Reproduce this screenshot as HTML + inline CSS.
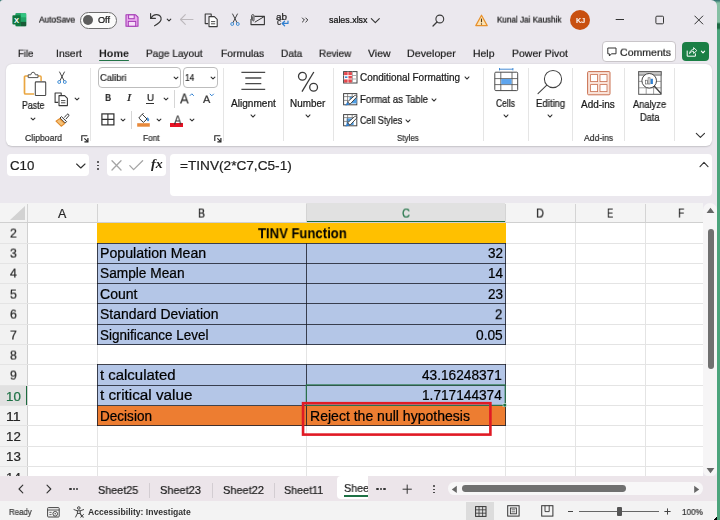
<!DOCTYPE html><html><head><meta charset="utf-8"><title>sales.xlsx - Excel</title><style>
html,body{margin:0;padding:0}
body{width:720px;height:520px;overflow:hidden;background:linear-gradient(to bottom,#2a6a6a 0,#86c0a4 3px,#86c0a4 22px,#1e6a44 24px,#1e6a44 28px,#4ca47c 30px);position:relative;font-family:"Liberation Sans",sans-serif}
#win{position:absolute;left:0;top:0;width:717px;height:520px;background:#ebe8ee;border-radius:3px 6px 7px 3px;overflow:hidden}
#win div,#win svg,#win span{position:absolute}
#win span{white-space:nowrap;line-height:1;transform-origin:0 50%;display:block;will-change:transform;-webkit-text-stroke:0.22px}

</style></head><body><div id="win">
<svg style="left:12px;top:13px;" width="15" height="14" viewBox="0 0 15 14">
<rect x="3.6" y="0.3" width="10.6" height="12.9" rx="1.3" fill="#1f9d5c"/>
<rect x="8.9" y="0.3" width="5.3" height="4.3" fill="#33c481"/>
<rect x="8.9" y="4.6" width="5.3" height="4.3" fill="#21a366"/>
<rect x="3.6" y="0.3" width="5.3" height="4.3" fill="#21a366"/>
<rect x="8.9" y="8.9" width="5.3" height="4.3" fill="#185c37"/>
<rect x="3.6" y="8.9" width="5.3" height="4.3" fill="#107c41"/>
<rect x="0.4" y="2.2" width="8.2" height="9.2" rx="0.9" fill="#0f753c"/>
<text x="4.5" y="9.6" font-family="Liberation Sans, sans-serif" font-weight="bold" font-size="7.6" fill="#fff" text-anchor="middle">X</text>
</svg>
<div style="left:79.5px;top:12px;width:35.5px;height:15px;border:1px solid #6e6e6e;border-radius:9px;background:#fbfbfb"></div>
<div style="left:83px;top:15px;width:10px;height:10px;border-radius:5px;background:#5d5d5d"></div>
<svg style="left:124.5px;top:13.5px;" width="14" height="13" viewBox="0 0 14 13">
<path d="M1 0.8 H10.6 L13 3.2 V12.2 H1 Z" fill="#e9a9ee" stroke="#a43ab5" stroke-width="1.1" stroke-linejoin="round"/>
<rect x="3.6" y="0.9" width="5.6" height="3.8" fill="#f6dff8" stroke="#a43ab5" stroke-width="1"/>
<rect x="3.3" y="7.4" width="7.4" height="4.8" fill="#f6dff8" stroke="#a43ab5" stroke-width="1"/>
</svg>
<svg style="left:148.5px;top:12px;" width="14" height="15" viewBox="0 0 14 15">
<path d="M1.6 1.6 V6.4 H6.4" fill="none" stroke="#3a3a3a" stroke-width="1.15" stroke-linecap="round" stroke-linejoin="round"/>
<path d="M1.9 6.1 C3.4 3.6 5.6 2.4 7.8 2.6 C10.6 2.9 12.3 5 12.1 7.4 C11.9 10 9.3 11.6 5.6 13.8" fill="none" stroke="#3a3a3a" stroke-width="1.15" stroke-linecap="round"/>
</svg>
<svg style="left:164px;top:15.3px;" width="10" height="10" viewBox="0 0 10 10"><path d="M3.2 4.08 L5 5.92 L6.8 4.08" fill="none" stroke="#333" stroke-width="1.1" stroke-linecap="round" stroke-linejoin="round"/></svg>
<svg style="left:179px;top:13px;" width="16" height="13" viewBox="0 0 16 13"><path d="M1.5 6.5 H14 M6.3 1.6 L1.5 6.5 L6.3 11.4" fill="none" stroke="#bdb9bd" stroke-width="1.1" stroke-linecap="round" stroke-linejoin="round"/></svg>
<svg style="left:203.5px;top:12.5px;" width="15" height="15" viewBox="0 0 15 15">
<path d="M4.2 10.6 H1.2 V1 H7.2 V3.2" fill="none" stroke="#3a3a3a" stroke-width="1.1" stroke-linejoin="round"/>
<path d="M5 3.6 H10.4 L13.2 6.4 V13.6 H5 Z" fill="#fff" stroke="#3a3a3a" stroke-width="1.1" stroke-linejoin="round"/>
<path d="M7 8.6 H11.2 M7 10.8 H11.2" stroke="#3a3a3a" stroke-width="0.9"/>
</svg>
<svg style="left:228.5px;top:13px;" width="12" height="14" viewBox="0 0 12 14">
<path d="M3.6 1 L8 9.6 M8.4 1 L4 9.6" fill="none" stroke="#3a3a3a" stroke-width="0.95" stroke-linecap="round"/>
<circle cx="3.2" cy="11" r="1.45" fill="none" stroke="#3b8bd6" stroke-width="0.95"/>
<circle cx="8.8" cy="11" r="1.45" fill="none" stroke="#3b8bd6" stroke-width="0.95"/>
</svg>
<svg style="left:250px;top:13.5px;" width="16" height="12" viewBox="0 0 16 12">
<path d="M4.6 2.4 H14.4 V10.6 H1 V5" fill="none" stroke="#3a3a3a" stroke-width="1.1" stroke-linejoin="round"/>
<path d="M4.8 8.2 L14.2 2.6" fill="none" stroke="#3a3a3a" stroke-width="1"/>
<path d="M1.6 5.6 V1.8 Q1.6 0.6 2.8 0.6 Q4 0.6 4 1.8 V6.2 Q4 7 3.3 7 Q2.7 7 2.7 6.2 V2.4" fill="none" stroke="#3a3a3a" stroke-width="0.9"/>
</svg>
<svg style="left:279.6px;top:19.6px;" width="10" height="8" viewBox="0 0 10 8"><path d="M8 1 V3.4 H2.4 M4.6 1.2 L2.2 3.5 L4.6 5.8" fill="none" stroke="#2f7fd0" stroke-width="1.2" stroke-linecap="round" stroke-linejoin="round"/></svg>
<svg style="left:301px;top:16px;" width="9" height="8" viewBox="0 0 9 8"><path d="M1.4 2 L3.4 4 L1.4 6 M4.8 2 L6.8 4 L4.8 6" fill="none" stroke="#333" stroke-width="1" stroke-linecap="round" stroke-linejoin="round"/></svg>
<svg style="left:370px;top:16px;" width="11" height="9" viewBox="0 0 11 9"><path d="M1.3 2.6 L5.3 6.6 L9.3 2.6" fill="none" stroke="#333" stroke-width="1.1" stroke-linecap="round" stroke-linejoin="round"/></svg>
<svg style="left:432px;top:13.5px;" width="13" height="13" viewBox="0 0 13 13"><circle cx="7.8" cy="5" r="3.9" fill="none" stroke="#3a3a3a" stroke-width="1.1"/><path d="M5 8 L1 12" stroke="#3a3a3a" stroke-width="1.2" stroke-linecap="round"/></svg>
<svg style="left:474.5px;top:13.5px;" width="13" height="13" viewBox="0 0 13 13"><path d="M6.5 1.2 L12.2 11.6 H0.8 Z" fill="#fbe3b5" stroke="#e8902a" stroke-width="1.2" stroke-linejoin="round"/>
<path d="M6.5 4.6 V8.2" stroke="#5a3a10" stroke-width="1.1"/><circle cx="6.5" cy="10" r="0.65" fill="#5a3a10"/></svg>
<div style="left:570px;top:10px;width:20px;height:20px;border-radius:10px;background:#c8500f"></div>
<svg style="left:615px;top:15px;" width="10" height="10" viewBox="0 0 10 10"><path d="M0.7 4.5 H9" stroke="#333" stroke-width="1"/></svg>
<svg style="left:654.5px;top:15px;" width="10" height="10" viewBox="0 0 10 10"><rect x="0.9" y="1.2" width="7.6" height="7.6" rx="1" fill="none" stroke="#333" stroke-width="1"/></svg>
<svg style="left:693.5px;top:15px;" width="10" height="10" viewBox="0 0 10 10"><path d="M0.8 1 L8.8 9 M8.8 1 L0.8 9" stroke="#333" stroke-width="1" stroke-linecap="round"/></svg>
<div style="left:99px;top:59.5px;width:30px;height:1.7px;background:#217346;border-radius:1px;"></div>
<div style="left:601.8px;top:40.8px;width:72.2px;height:19px;border:1px solid #c9c5c9;border-radius:4px;background:#fff"></div>
<svg style="left:606.8px;top:46.5px;" width="11" height="11" viewBox="0 0 11 11"><path d="M0.8 1 H9 V6.8 H4.4 L2.4 9 V6.8 H0.8 Z" fill="none" stroke="#333" stroke-width="1" stroke-linejoin="round"/></svg>
<div style="left:682.4px;top:41.6px;width:26.4px;height:19.6px;border-radius:4px;background:#1a7f45"></div>
<svg style="left:686px;top:45.6px;" width="12" height="12" viewBox="0 0 12 12"><path d="M1.2 4.6 V10.2 H9.4 V7.4" fill="none" stroke="#fff" stroke-width="1" stroke-linejoin="round"/><path d="M3.6 7.6 C3.8 5 5.4 3.6 7.6 3.6 V1.6 L10.8 4.6 L7.6 7.4 V5.4 C5.8 5.4 4.6 6 3.6 7.6 Z" fill="none" stroke="#fff" stroke-width="0.9" stroke-linejoin="round"/></svg>
<svg style="left:697.8px;top:46.9px;" width="10" height="10" viewBox="0 0 10 10"><path d="M3.38 4.126 L5 5.874 L6.62 4.126" fill="none" stroke="#fff" stroke-width="1.1" stroke-linecap="round" stroke-linejoin="round"/></svg>
<div style="left:6px;top:64px;width:706px;height:82.4px;border-radius:6px;background:#fff;box-shadow:0 0.5px 1.5px rgba(0,0,0,0.16)"></div>
<svg style="left:23px;top:70.5px;" width="24" height="26" viewBox="0 0 24 26">
<path d="M6 5 H2.6 Q1.5 5 1.5 6.1 V21.9 Q1.5 23 2.6 23 H11" fill="none" stroke="#eaa640" stroke-width="1.7"/>
<path d="M14.4 5 H17 Q18.1 5 18.1 6.1 V10" fill="none" stroke="#eaa640" stroke-width="1.5"/>
<path d="M5.2 6.6 V3.8 H7.8 Q8.2 1.2 10.1 1.2 Q12 1.2 12.4 3.8 H15 V6.6 Z" fill="#fff" stroke="#555" stroke-width="1" stroke-linejoin="round"/>
<rect x="12.3" y="10.9" width="10.4" height="13.6" rx="0.8" fill="#fff" stroke="#4a4a4a" stroke-width="1.1"/>
</svg>
<svg style="left:27.6px;top:113.7px;" width="10" height="10" viewBox="0 0 10 10"><path d="M3.11 4.034 L5 5.966 L6.890000000000001 4.034" fill="none" stroke="#333" stroke-width="1.1" stroke-linecap="round" stroke-linejoin="round"/></svg>
<svg style="left:56px;top:71px;" width="12" height="14" viewBox="0 0 12 14">
<path d="M3.6 1 L8 9.6 M8.4 1 L4 9.6" fill="none" stroke="#3a3a3a" stroke-width="0.95" stroke-linecap="round"/>
<circle cx="3.2" cy="11" r="1.45" fill="none" stroke="#3b8bd6" stroke-width="0.95"/>
<circle cx="8.8" cy="11" r="1.45" fill="none" stroke="#3b8bd6" stroke-width="0.95"/>
</svg>
<svg style="left:54.3px;top:91.6px;" width="15" height="15" viewBox="0 0 15 15">
<path d="M4.2 10.4 H1.1 V1 H7.2 V3.2" fill="none" stroke="#3a3a3a" stroke-width="1.1" stroke-linejoin="round"/>
<path d="M5 3.6 H10.6 L13.4 6.4 V13.6 H5 Z" fill="#fff" stroke="#3a3a3a" stroke-width="1.1" stroke-linejoin="round"/>
<path d="M7 8.6 H11.4 M7 10.8 H11.4" stroke="#3a3a3a" stroke-width="0.9"/>
</svg>
<svg style="left:72px;top:94.2px;" width="10" height="10" viewBox="0 0 10 10"><path d="M3.11 4.034 L5 5.966 L6.890000000000001 4.034" fill="none" stroke="#333" stroke-width="1.1" stroke-linecap="round" stroke-linejoin="round"/></svg>
<svg style="left:54.5px;top:113px;" width="15" height="14" viewBox="0 0 15 14">
<path d="M9.2 4.6 L12 1.4 Q12.8 0.6 13.6 1.4 Q14.3 2.2 13.6 3 L10.8 6.2" fill="#fff" stroke="#3a3a3a" stroke-width="1"/>
<path d="M6.4 3.6 L11.6 8.6 L10.2 10 L5 5 Z" fill="#fff" stroke="#3a3a3a" stroke-width="1" stroke-linejoin="round"/>
<path d="M4.6 5.6 L9.6 10.6 L6.2 13.2 L1 8.2 Z" fill="#f4c27a" stroke="#e08a2c" stroke-width="1.1" stroke-linejoin="round"/>
</svg>
<svg style="left:80.5px;top:134.6px;" width="8" height="8" viewBox="0 0 8 8"><path d="M0.8 6 V0.8 H6.4" fill="none" stroke="#222" stroke-width="1.1"/><path d="M3.3 3.3 L6.6 6.4" stroke="#222" stroke-width="1.1"/><path d="M6.9 3 V6.8 H3.4" fill="none" stroke="#222" stroke-width="1.2"/></svg>
<div style="left:89.5px;top:68px;width:1px;height:73px;background:#e5e5e5;"></div>
<div style="left:97.8px;top:67.4px;width:81.6px;height:18.8px;border:1px solid #bdbdbd;border-radius:4px;background:#fff"></div>
<svg style="left:170.7px;top:73.3px;" width="10" height="10" viewBox="0 0 10 10"><path d="M3.11 4.034 L5 5.966 L6.890000000000001 4.034" fill="none" stroke="#333" stroke-width="1.1" stroke-linecap="round" stroke-linejoin="round"/></svg>
<div style="left:182.7px;top:67.4px;width:33.7px;height:18.8px;border:1px solid #bdbdbd;border-radius:4px;background:#fff"></div>
<svg style="left:207.5px;top:73.3px;" width="10" height="10" viewBox="0 0 10 10"><path d="M3.11 4.034 L5 5.966 L6.890000000000001 4.034" fill="none" stroke="#333" stroke-width="1.1" stroke-linecap="round" stroke-linejoin="round"/></svg>
<div style="left:146.3px;top:102.7px;width:7.6px;height:1px;background:#333;"></div>
<svg style="left:161px;top:94.2px;" width="10" height="10" viewBox="0 0 10 10"><path d="M3.11 4.034 L5 5.966 L6.890000000000001 4.034" fill="none" stroke="#333" stroke-width="1.1" stroke-linecap="round" stroke-linejoin="round"/></svg>
<div style="left:173.7px;top:90px;width:1px;height:17.599999999999994px;background:#d6d6d6;"></div>
<svg style="left:188.5px;top:92.5px;" width="6" height="4" viewBox="0 0 6 4"><path d="M0.8 2.8 L2.8 0.8 L4.8 2.8" fill="none" stroke="#2f7fd0" stroke-width="1"/></svg>
<svg style="left:209px;top:93px;" width="6" height="4" viewBox="0 0 6 4"><path d="M0.8 0.8 L2.8 2.8 L4.8 0.8" fill="none" stroke="#2f7fd0" stroke-width="1"/></svg>
<svg style="left:100.5px;top:113.4px;" width="14" height="13" viewBox="0 0 14 13"><rect x="0.9" y="0.9" width="12" height="11" fill="none" stroke="#2e2e2e" stroke-width="1.2"/><path d="M6.9 0.9 V11.9 M0.9 6.4 H12.9" stroke="#2e2e2e" stroke-width="1.1"/></svg>
<svg style="left:118px;top:115.3px;" width="10" height="10" viewBox="0 0 10 10"><path d="M3.11 4.034 L5 5.966 L6.890000000000001 4.034" fill="none" stroke="#333" stroke-width="1.1" stroke-linecap="round" stroke-linejoin="round"/></svg>
<div style="left:130.9px;top:110.5px;width:1px;height:18.5px;background:#d6d6d6;"></div>
<svg style="left:137px;top:113px;" width="14" height="14" viewBox="0 0 14 14">
<path d="M5.2 1.2 L10 6 L6.4 9.4 L1.8 5 Z" fill="#fff" stroke="#3a3a3a" stroke-width="1" stroke-linejoin="round"/>
<path d="M5.2 1.2 L6.6 0.4" stroke="#3a3a3a" stroke-width="1"/>
<path d="M10.6 4.6 Q12.6 7 11.4 8 Q10.2 8.4 10.4 6.6 Z" fill="#2f7fd0" stroke="#2f7fd0" stroke-width="0.6"/>
<rect x="0.2" y="10.2" width="12.6" height="3.5" fill="#e8893b"/>
</svg>
<svg style="left:153.8px;top:115.3px;" width="10" height="10" viewBox="0 0 10 10"><path d="M3.11 4.034 L5 5.966 L6.890000000000001 4.034" fill="none" stroke="#333" stroke-width="1.1" stroke-linecap="round" stroke-linejoin="round"/></svg>
<div style="left:170.3px;top:123.2px;width:13px;height:3.5px;background:#e81224;"></div>
<svg style="left:187.3px;top:115.3px;" width="10" height="10" viewBox="0 0 10 10"><path d="M3.11 4.034 L5 5.966 L6.890000000000001 4.034" fill="none" stroke="#333" stroke-width="1.1" stroke-linecap="round" stroke-linejoin="round"/></svg>
<svg style="left:213.6px;top:134.5px;" width="8" height="8" viewBox="0 0 8 8"><path d="M0.8 6 V0.8 H6.4" fill="none" stroke="#222" stroke-width="1.1"/><path d="M3.3 3.3 L6.6 6.4" stroke="#222" stroke-width="1.1"/><path d="M6.9 3 V6.8 H3.4" fill="none" stroke="#222" stroke-width="1.2"/></svg>
<div style="left:223.1px;top:68px;width:1px;height:73px;background:#e5e5e5;"></div>
<svg style="left:241px;top:71px;" width="25" height="20" viewBox="0 0 25 20"><path d="M0.4 1.3 H24.2 M4.3 7 H20.3 M4.3 12.7 H20.3 M0.4 18.3 H24.2" stroke="#4a4a4a" stroke-width="1.3"/></svg>
<svg style="left:247.5px;top:110.7px;" width="10" height="10" viewBox="0 0 10 10"><path d="M3.0199999999999996 3.9879999999999995 L5 6.0120000000000005 L6.98 3.9879999999999995" fill="none" stroke="#333" stroke-width="1.1" stroke-linecap="round" stroke-linejoin="round"/></svg>
<div style="left:283.1px;top:68px;width:1px;height:73px;background:#e5e5e5;"></div>
<svg style="left:297px;top:70.5px;" width="22" height="22" viewBox="0 0 22 22"><circle cx="5.4" cy="5.2" r="3.9" fill="none" stroke="#3a3a3a" stroke-width="1.3"/><circle cx="16.6" cy="16.2" r="3.9" fill="none" stroke="#3a3a3a" stroke-width="1.3"/><path d="M16.8 1 L5 20.6" stroke="#3a3a3a" stroke-width="1.3"/></svg>
<svg style="left:302.5px;top:110.7px;" width="10" height="10" viewBox="0 0 10 10"><path d="M3.0199999999999996 3.9879999999999995 L5 6.0120000000000005 L6.98 3.9879999999999995" fill="none" stroke="#333" stroke-width="1.1" stroke-linecap="round" stroke-linejoin="round"/></svg>
<div style="left:332.9px;top:68px;width:1px;height:73px;background:#e5e5e5;"></div>
<svg style="left:342.5px;top:71px;" width="15" height="13" viewBox="0 0 15 13">
<rect x="0.6" y="0.6" width="13.4" height="11.4" fill="#fff" stroke="#444" stroke-width="1"/>
<rect x="1.1" y="1.1" width="8" height="3.3" fill="#e5484d"/>
<rect x="5.2" y="4.6" width="4" height="3.2" fill="#e5484d"/>
<rect x="1.1" y="8.1" width="8" height="3.4" fill="#e5484d"/>
<rect x="2" y="5.4" width="2.6" height="1.6" fill="#3b8bd6"/>
<path d="M5 0.6 V12 M9.4 0.6 V12 M0.6 4.5 H14 M0.6 8 H14" stroke="#fff" stroke-width="0.7"/>
<path d="M9.4 0.6 V12 M9.4 4.5 H14 M9.4 8 H14" stroke="#777" stroke-width="0.6"/>
</svg>
<svg style="left:342.5px;top:92.9px;" width="15" height="13" viewBox="0 0 15 13">
<rect x="0.6" y="0.6" width="13.2" height="11.2" fill="#fff" stroke="#444" stroke-width="1"/>
<rect x="6.6" y="3.8" width="7" height="6.6" fill="#4f9fe6"/>
<path d="M0.6 3.6 H13.8 M0.6 7.4 H5 M4.6 0.6 V11.8 M9.2 0.6 V3.6" stroke="#666" stroke-width="0.7"/>
<path d="M2.4 12.6 L4.2 9 L6.8 11.6 Z" fill="#2f7fd0"/>
<path d="M4.6 8.8 L11.6 2.6 Q12.6 1.9 13.4 2.7 Q14.1 3.6 13.3 4.5 L7 11.2 Z" fill="#fff" stroke="#333" stroke-width="0.9" stroke-linejoin="round"/>
</svg>
<svg style="left:342.5px;top:114.2px;" width="15" height="13" viewBox="0 0 15 13">
<rect x="0.6" y="0.6" width="13.2" height="11.2" fill="#fff" stroke="#444" stroke-width="1"/>
<rect x="3.6" y="4.4" width="7" height="6.6" fill="#4f9fe6"/>
<path d="M0.6 3.6 H13.8 M0.6 7.4 H5 M4.6 0.6 V11.8 M9.2 0.6 V3.6" stroke="#666" stroke-width="0.7"/>
<path d="M2.4 12.6 L4.2 9 L6.8 11.6 Z" fill="#2f7fd0"/>
<path d="M4.6 8.8 L11.6 2.6 Q12.6 1.9 13.4 2.7 Q14.1 3.6 13.3 4.5 L7 11.2 Z" fill="#fff" stroke="#333" stroke-width="0.9" stroke-linejoin="round"/>
</svg>
<svg style="left:461.5px;top:73.3px;" width="10" height="10" viewBox="0 0 10 10"><path d="M3.0199999999999996 3.9879999999999995 L5 6.0120000000000005 L6.98 3.9879999999999995" fill="none" stroke="#333" stroke-width="1.1" stroke-linecap="round" stroke-linejoin="round"/></svg>
<svg style="left:428.5px;top:94.9px;" width="10" height="10" viewBox="0 0 10 10"><path d="M3.0199999999999996 3.9879999999999995 L5 6.0120000000000005 L6.98 3.9879999999999995" fill="none" stroke="#333" stroke-width="1.1" stroke-linecap="round" stroke-linejoin="round"/></svg>
<svg style="left:403px;top:116.3px;" width="10" height="10" viewBox="0 0 10 10"><path d="M3.0199999999999996 3.9879999999999995 L5 6.0120000000000005 L6.98 3.9879999999999995" fill="none" stroke="#333" stroke-width="1.1" stroke-linecap="round" stroke-linejoin="round"/></svg>
<div style="left:483.1px;top:68px;width:1px;height:73px;background:#e5e5e5;"></div>
<svg style="left:493.5px;top:67.5px;" width="25" height="24" viewBox="0 0 25 24">
<path d="M5.5 1.2 H18.9 M5.5 0 V2.4 M18.9 0 V2.4" stroke="#2f7fd0" stroke-width="0.9"/>
<rect x="0.8" y="4.2" width="22.9" height="18.4" rx="1" fill="#fff" stroke="#4a4a4a" stroke-width="1"/>
<path d="M0.8 10.6 H23.7 M0.8 16.6 H23.7 M6.8 4.2 V22.6 M18 4.2 V22.6" stroke="#4a4a4a" stroke-width="0.8"/>
<rect x="7.2" y="11" width="10.4" height="5.2" fill="#5ea5ee"/>
</svg>
<svg style="left:500.5px;top:110.7px;" width="10" height="10" viewBox="0 0 10 10"><path d="M3.0199999999999996 3.9879999999999995 L5 6.0120000000000005 L6.98 3.9879999999999995" fill="none" stroke="#333" stroke-width="1.1" stroke-linecap="round" stroke-linejoin="round"/></svg>
<div style="left:527.8px;top:68px;width:1px;height:73px;background:#e5e5e5;"></div>
<svg style="left:537px;top:68.5px;" width="27" height="26" viewBox="0 0 27 26"><circle cx="16" cy="10" r="8.6" fill="none" stroke="#444" stroke-width="1.05"/><path d="M9.8 16.2 L1 24.6" stroke="#444" stroke-width="1.1" stroke-linecap="round"/></svg>
<svg style="left:545px;top:110.7px;" width="10" height="10" viewBox="0 0 10 10"><path d="M3.0199999999999996 3.9879999999999995 L5 6.0120000000000005 L6.98 3.9879999999999995" fill="none" stroke="#333" stroke-width="1.1" stroke-linecap="round" stroke-linejoin="round"/></svg>
<div style="left:572.0px;top:68px;width:1px;height:73px;background:#e5e5e5;"></div>
<svg style="left:586.8px;top:70.6px;" width="24" height="25" viewBox="0 0 24 25">
<rect x="0.6" y="0.6" width="22.4" height="23.2" rx="1" fill="#f9e2d8" stroke="#c97050" stroke-width="1"/>
<rect x="3.6" y="3.6" width="7" height="7" fill="#fff" stroke="#c97050" stroke-width="0.8"/>
<rect x="13" y="3.6" width="7" height="7" fill="#fff" stroke="#c97050" stroke-width="0.8"/>
<rect x="3.6" y="13.6" width="7" height="7" fill="#fff" stroke="#c97050" stroke-width="0.8"/>
<rect x="13" y="13.6" width="7" height="7" fill="#fff" stroke="#c97050" stroke-width="0.8"/>
</svg>
<div style="left:623.8px;top:68px;width:1px;height:73px;background:#e5e5e5;"></div>
<svg style="left:637.6px;top:70.6px;" width="24" height="25" viewBox="0 0 24 25">
<rect x="0.7" y="0.7" width="22.4" height="22.6" fill="#fff" stroke="#555" stroke-width="1"/>
<rect x="0.7" y="0.7" width="22.4" height="3.4" fill="#c8c8c8" stroke="#555" stroke-width="0.8"/>
<path d="M0.7 10.4 H23.1 M0.7 16.8 H23.1 M8.2 4 V23.3 M15.6 4 V23.3" stroke="#777" stroke-width="0.7"/>
<circle cx="11.2" cy="9.8" r="7.3" fill="#fff" stroke="#444" stroke-width="1"/>
<rect x="7.6" y="9.2" width="1.9" height="3.8" fill="#fff" stroke="#555" stroke-width="0.6"/>
<rect x="10.1" y="6.8" width="1.9" height="6.2" fill="#fff" stroke="#555" stroke-width="0.6"/>
<rect x="12.6" y="7.8" width="2.3" height="5.2" fill="#2f7fd0"/>
<path d="M16.4 15.2 L22.8 22.2" stroke="#444" stroke-width="1.3" stroke-linecap="round"/>
</svg>
<div style="left:674.2px;top:68px;width:1px;height:73px;background:#e5e5e5;"></div>
<svg style="left:694.5px;top:131px;" width="11" height="9" viewBox="0 0 11 9"><path d="M1.3 2.4 L5.4 6.4 L9.5 2.4" fill="none" stroke="#333" stroke-width="1.1" stroke-linecap="round" stroke-linejoin="round"/></svg>
<div style="left:6.75px;top:153.75px;width:82.5px;height:22.5px;border-radius:4px;background:#fff"></div>
<svg style="left:75px;top:161px;" width="12" height="10" viewBox="0 0 12 10"><path d="M1.6 3 L5.8 7 L10 3" fill="none" stroke="#333" stroke-width="1.1" stroke-linecap="round" stroke-linejoin="round"/></svg>
<div style="left:97.1px;top:161.4px;width:1.9px;height:1.9px;background:#333;border-radius:1px;"></div>
<div style="left:97.1px;top:164.60000000000002px;width:1.9px;height:1.9px;background:#333;border-radius:1px;"></div>
<div style="left:97.1px;top:167.8px;width:1.9px;height:1.9px;background:#333;border-radius:1px;"></div>
<div style="left:106.75px;top:153.75px;width:59px;height:22.5px;border-radius:4px;background:#fff"></div>
<svg style="left:111px;top:160px;" width="11" height="11" viewBox="0 0 11 11"><path d="M1 0.8 L10 10 M10 0.8 L1 10" stroke="#a6a6a6" stroke-width="1.3" stroke-linecap="round"/></svg>
<svg style="left:129px;top:160px;" width="15" height="11" viewBox="0 0 15 11"><path d="M0.8 5.6 L4.6 9.6 L13.6 0.8" fill="none" stroke="#a6a6a6" stroke-width="1.3" stroke-linecap="round" stroke-linejoin="round"/></svg>
<div style="left:170px;top:153.5px;width:541.5px;height:42.5px;border-radius:4px;background:#fff"></div>
<svg style="left:699px;top:159.5px;" width="10" height="9" viewBox="0 0 10 9"><path d="M1 6.6 L5 2.4 L9 6.6" fill="none" stroke="#333" stroke-width="1.1" stroke-linecap="round" stroke-linejoin="round"/></svg>
<div style="left:0px;top:203px;width:703px;height:272.8px;background:#fff;"></div>
<div style="left:0px;top:203px;width:703px;height:19.5px;background:#f4f4f4;"></div>
<div style="left:0px;top:222.5px;width:27px;height:253.3px;background:#f2f2f2;"></div>
<div style="left:306px;top:203px;width:199px;height:19.5px;background:#e1e1e1;"></div>
<div style="left:306px;top:221.1px;width:199px;height:1.4px;background:#1c6b3e;"></div>
<div style="left:0px;top:385.2px;width:27px;height:20.30000000000001px;background:#e1e1e1;"></div>
<div style="left:25.8px;top:385.2px;width:1.4px;height:20.30000000000001px;background:#1c6b3e;"></div>
<svg style="left:9px;top:205px;" width="17" height="16" viewBox="0 0 17 16"><path d="M16 1 V15 H1 Z" fill="#d2d2d2"/></svg>
<div style="left:26.5px;top:204px;width:1px;height:18.5px;background:#d4d4d4;"></div>
<div style="left:96.5px;top:204px;width:1px;height:18.5px;background:#d4d4d4;"></div>
<div style="left:305.5px;top:204px;width:1px;height:18.5px;background:#d4d4d4;"></div>
<div style="left:504.5px;top:204px;width:1px;height:18.5px;background:#d4d4d4;"></div>
<div style="left:574.5px;top:204px;width:1px;height:18.5px;background:#d4d4d4;"></div>
<div style="left:644.5px;top:204px;width:1px;height:18.5px;background:#d4d4d4;"></div>
<div style="left:0px;top:222.0px;width:703px;height:1px;background:#d0d0d0;"></div>
<div style="left:96.5px;top:222.5px;width:1px;height:253.3px;background:#e4e4e4;"></div>
<div style="left:305.5px;top:222.5px;width:1px;height:253.3px;background:#e4e4e4;"></div>
<div style="left:504.5px;top:222.5px;width:1px;height:253.3px;background:#e4e4e4;"></div>
<div style="left:574.5px;top:222.5px;width:1px;height:253.3px;background:#e4e4e4;"></div>
<div style="left:644.5px;top:222.5px;width:1px;height:253.3px;background:#e4e4e4;"></div>
<div style="left:26.5px;top:222.5px;width:1px;height:253.3px;background:#d0d0d0;"></div>
<div style="left:0px;top:242.5px;width:703px;height:1px;background:#e4e4e4;"></div>
<div style="left:0px;top:262.5px;width:703px;height:1px;background:#e4e4e4;"></div>
<div style="left:0px;top:282.9px;width:703px;height:1px;background:#e4e4e4;"></div>
<div style="left:0px;top:303.3px;width:703px;height:1px;background:#e4e4e4;"></div>
<div style="left:0px;top:323.7px;width:703px;height:1px;background:#e4e4e4;"></div>
<div style="left:0px;top:344.0px;width:703px;height:1px;background:#e4e4e4;"></div>
<div style="left:0px;top:364.3px;width:703px;height:1px;background:#e4e4e4;"></div>
<div style="left:0px;top:384.7px;width:703px;height:1px;background:#e4e4e4;"></div>
<div style="left:0px;top:405.0px;width:703px;height:1px;background:#e4e4e4;"></div>
<div style="left:0px;top:425.2px;width:703px;height:1px;background:#e4e4e4;"></div>
<div style="left:0px;top:445.7px;width:703px;height:1px;background:#e4e4e4;"></div>
<div style="left:0px;top:465.9px;width:703px;height:1px;background:#e4e4e4;"></div>
<span style="left:6px;top:472px;font-size:12.4px;color:#262626;transform:scaleX(1.08);will-change:transform">14</span>
<div style="left:97px;top:222.5px;width:408.5px;height:20.5px;background:#ffc000;"></div>
<div style="left:97px;top:243px;width:408.5px;height:101.6px;background:#b4c6e7;"></div>
<div style="left:97px;top:364.8px;width:408.5px;height:40.7px;background:#b4c6e7;"></div>
<div style="left:97px;top:405.5px;width:408.5px;height:20.3px;background:#ed7d31;"></div>
<div style="left:97px;top:242.5px;width:408.5px;height:1px;background:rgba(28,32,44,0.82);"></div>
<div style="left:97px;top:262.5px;width:408.5px;height:1px;background:rgba(28,32,44,0.82);"></div>
<div style="left:97px;top:282.9px;width:408.5px;height:1px;background:rgba(28,32,44,0.82);"></div>
<div style="left:97px;top:303.3px;width:408.5px;height:1px;background:rgba(28,32,44,0.82);"></div>
<div style="left:97px;top:323.7px;width:408.5px;height:1px;background:rgba(28,32,44,0.82);"></div>
<div style="left:97px;top:344.0px;width:408.5px;height:1px;background:rgba(28,32,44,0.82);"></div>
<div style="left:97px;top:364.3px;width:408.5px;height:1px;background:rgba(28,32,44,0.82);"></div>
<div style="left:97px;top:384.7px;width:408.5px;height:1px;background:rgba(28,32,44,0.82);"></div>
<div style="left:97px;top:405.0px;width:408.5px;height:1px;background:rgba(28,32,44,0.82);"></div>
<div style="left:97px;top:425.2px;width:408.5px;height:1px;background:rgba(28,32,44,0.82);"></div>
<div style="left:96.8px;top:242.5px;width:1px;height:102.5px;background:rgba(28,32,44,0.82);"></div>
<div style="left:305.8px;top:242.5px;width:1px;height:102.5px;background:rgba(28,32,44,0.82);"></div>
<div style="left:504.7px;top:242.5px;width:1px;height:102.5px;background:rgba(28,32,44,0.82);"></div>
<div style="left:96.8px;top:364.3px;width:1px;height:61.89999999999998px;background:rgba(28,32,44,0.82);"></div>
<div style="left:305.8px;top:364.3px;width:1px;height:61.89999999999998px;background:rgba(28,32,44,0.82);"></div>
<div style="left:504.7px;top:364.3px;width:1px;height:61.89999999999998px;background:rgba(28,32,44,0.82);"></div>
<svg style="left:304px;top:383px;" width="204" height="25" viewBox="0 0 204 25"><rect x="2.3" y="1.9" width="198.9" height="20.4" fill="none" stroke="#2a7a4c" stroke-width="1.1"/><rect x="198.8" y="20.2" width="3.8" height="3.8" fill="#fff"/><rect x="199.3" y="20.7" width="2.9" height="2.9" fill="#1e7145"/></svg>
<svg style="left:300px;top:400px;" width="194" height="38" viewBox="0 0 194 38"><rect x="3.05" y="3.2" width="187.35" height="31.4" fill="none" stroke="#e01a24" stroke-width="2.6"/></svg>
<div style="left:703.4px;top:203px;width:13.6px;height:274px;background:#f6f5f6;border-radius:7px 7px 7px 7px"></div>
<svg style="left:705.6px;top:206.5px;" width="9" height="7" viewBox="0 0 9 7"><path d="M4.5 0.8 L8.4 6 H0.6 Z" fill="#666"/></svg>
<svg style="left:706.4px;top:467.4px;" width="9" height="7" viewBox="0 0 9 7"><path d="M4.5 6.2 L8.4 1 H0.6 Z" fill="#666"/></svg>
<div style="left:707.6px;top:228.7px;width:6px;height:140.3px;background:#707070;border-radius:3px"></div>
<div style="left:0px;top:475.8px;width:717px;height:25.2px;background:#ece5ea;"></div>
<svg style="left:17px;top:483px;" width="8" height="12" viewBox="0 0 8 12"><path d="M5.8 2.2 L2 6 L5.8 9.8" fill="none" stroke="#333" stroke-width="1.1" stroke-linecap="round" stroke-linejoin="round"/></svg>
<svg style="left:44.5px;top:483px;" width="8" height="12" viewBox="0 0 8 12"><path d="M2 2.2 L5.8 6 L2 9.8" fill="none" stroke="#333" stroke-width="1.1" stroke-linecap="round" stroke-linejoin="round"/></svg>
<div style="left:69.2px;top:487.6px;width:2.4px;height:2.4px;background:#333;border-radius:1.2px;"></div>
<div style="left:72.6px;top:487.6px;width:2.4px;height:2.4px;background:#333;border-radius:1.2px;"></div>
<div style="left:76.0px;top:487.6px;width:2.4px;height:2.4px;background:#333;border-radius:1.2px;"></div>
<div style="left:149px;top:482.5px;width:1px;height:15px;background:#d3cdd2;"></div>
<div style="left:212.2px;top:482.5px;width:1px;height:15px;background:#d3cdd2;"></div>
<div style="left:274px;top:482.5px;width:1px;height:15px;background:#d3cdd2;"></div>
<div style="left:337px;top:476.3px;width:31px;height:22.4px;background:#fff;border-radius:4px 0 0 4px;overflow:hidden"><span style="left:7.2px;top:6.70px;font-size:11.3px;color:#1f1f1f;transform:scaleX(0.955)">Sheet</span><div style="left:7.2px;top:19.2px;width:30px;height:1.9px;background:#1e7145"></div></div>
<div style="left:376.40000000000003px;top:487.6px;width:2.4px;height:2.4px;background:#333;border-radius:1.2px;"></div>
<div style="left:379.8px;top:487.6px;width:2.4px;height:2.4px;background:#333;border-radius:1.2px;"></div>
<div style="left:383.2px;top:487.6px;width:2.4px;height:2.4px;background:#333;border-radius:1.2px;"></div>
<svg style="left:402px;top:484px;" width="11" height="11" viewBox="0 0 11 11"><path d="M5.2 0.6 V9.8 M0.6 5.2 H9.8" stroke="#333" stroke-width="1"/></svg>
<div style="left:433px;top:485.4px;width:1.6px;height:1.6px;background:#333;border-radius:1px;"></div>
<div style="left:433px;top:488.6px;width:1.6px;height:1.6px;background:#333;border-radius:1px;"></div>
<div style="left:433px;top:491.8px;width:1.6px;height:1.6px;background:#333;border-radius:1px;"></div>
<div style="left:447.5px;top:482.3px;width:255.5px;height:12.8px;background:#f8f7f8;border-radius:6.4px"></div>
<svg style="left:451.4px;top:484.5px;" width="7" height="9" viewBox="0 0 7 9"><path d="M0.8 4.4 L5.8 0.8 V8 Z" fill="#666"/></svg>
<svg style="left:692.6px;top:484.5px;" width="7" height="9" viewBox="0 0 7 9"><path d="M6.2 4.4 L1.2 0.8 V8 Z" fill="#666"/></svg>
<div style="left:461.7px;top:485.4px;width:164.3px;height:6.8px;background:#707070;border-radius:3.4px"></div>
<div style="left:0px;top:501px;width:717px;height:19px;background:#f3f3f3;"></div>
<svg style="left:47px;top:506.5px;" width="13" height="11" viewBox="0 0 13 11"><rect x="0.6" y="0.6" width="11.6" height="9.4" rx="0.8" fill="none" stroke="#444" stroke-width="1"/><path d="M0.6 3 H12.2" stroke="#444" stroke-width="0.9"/><circle cx="8.2" cy="6.8" r="2.3" fill="#fff" stroke="#444" stroke-width="1"/><circle cx="8.2" cy="6.8" r="0.8" fill="#444"/><path d="M2.4 5.4 H4.6 M2.4 7.6 H4.6" stroke="#444" stroke-width="0.8"/></svg>
<svg style="left:73px;top:505.5px;" width="13" height="12" viewBox="0 0 13 12"><circle cx="5.8" cy="2" r="1.3" fill="none" stroke="#333" stroke-width="0.9"/><path d="M1 3.6 L4.4 4.8 H7.2 L10.6 3.6 M4.4 4.8 V7.4 L2.6 11 M7.2 4.8 V7.4 L9 11 M4.4 7.4 H7.2" fill="none" stroke="#333" stroke-width="0.9" stroke-linejoin="round" stroke-linecap="round"/><path d="M7.4 8.2 L10.8 11.4 M10.8 8.2 L7.4 11.4" stroke="#333" stroke-width="0.9"/></svg>
<div style="left:465.75px;top:502.3px;width:28.5px;height:17.7px;background:#dcdcdc;"></div>
<svg style="left:474.5px;top:505.8px;" width="12" height="11" viewBox="0 0 12 11"><rect x="0.6" y="0.6" width="10.4" height="9.8" fill="none" stroke="#333" stroke-width="1"/><path d="M4 0.6 V10.4 M7.6 0.6 V10.4 M0.6 3.8 H11 M0.6 7.2 H11" stroke="#333" stroke-width="0.8"/></svg>
<svg style="left:507.4px;top:505.4px;" width="13" height="12" viewBox="0 0 13 12"><rect x="0.7" y="0.7" width="11.4" height="10.4" fill="none" stroke="#333" stroke-width="1"/><rect x="3.4" y="3" width="6" height="5.8" fill="none" stroke="#333" stroke-width="0.9"/><path d="M4.6 4.8 H8.2 M4.6 6.8 H8.2" stroke="#333" stroke-width="0.7"/></svg>
<svg style="left:540.6px;top:505.4px;" width="13" height="12" viewBox="0 0 13 12"><rect x="0.7" y="0.7" width="11.2" height="10.4" fill="none" stroke="#333" stroke-width="1"/><path d="M4 0.7 V6.6 H8.2 V0.7" fill="none" stroke="#333" stroke-width="0.9"/></svg>
<div style="left:568.3px;top:510.6px;width:5px;height:1px;background:#444;"></div>
<div style="left:579px;top:510.6px;width:80.3px;height:1px;background:#666;"></div>
<div style="left:617.4px;top:506.6px;width:4.2px;height:9.4px;background:#555;border-radius:1px;"></div>
<svg style="left:664px;top:507.6px;" width="8" height="8" viewBox="0 0 8 8"><path d="M3.5 0.4 V6.6 M0.4 3.5 H6.6" stroke="#444" stroke-width="1"/></svg>
<span style="left:38.8px;top:16.00px;font-size:8.8px;color:#111;transform:scale(0.9461,1.0500);transform-origin:0 7.00px;">AutoSave</span>
<span style="left:98px;top:16.00px;font-size:8.8px;color:#111;transform:scale(1.0364,1.0500);transform-origin:0 7.00px;">Off</span>
<span style="left:276.4px;top:13.00px;font-size:9px;color:#222;transform:scaleX(1.0983);">ab</span>
<span style="left:276.6px;top:18.00px;font-size:8.6px;color:#222;transform:scaleX(0.9309);">c</span>
<span style="left:329px;top:16.00px;font-size:8.8px;color:#111;transform:scale(1.0094,1.0500);transform-origin:0 7.00px;">sales.xlsx</span>
<span style="left:497.3px;top:16.00px;font-size:8.8px;color:#111;transform:scale(0.9208,1.0500);transform-origin:0 7.00px;">Kunal Jai Kaushik</span>
<span style="left:575.6px;top:17.00px;font-size:7.4px;color:#fff;transform:scaleX(1.0435);">KJ</span>
<span style="left:17.5px;top:49.00px;font-size:10.3px;color:#1c1c1c;transform:scale(0.9341,0.9250);transform-origin:0 8.00px;">File</span>
<span style="left:55.5px;top:49.00px;font-size:10.3px;color:#1c1c1c;transform:scale(1.0091,0.9250);transform-origin:0 8.00px;">Insert</span>
<span style="left:99px;top:49.00px;font-size:10.3px;color:#1f1f1f;font-weight:bold;-webkit-text-stroke:0;transform:scale(1.0486,0.9250);transform-origin:0 8.00px;">Home</span>
<span style="left:146px;top:49.00px;font-size:10.3px;color:#1c1c1c;transform:scale(0.9770,0.9250);transform-origin:0 8.00px;">Page Layout</span>
<span style="left:220.75px;top:49.00px;font-size:10.3px;color:#1c1c1c;transform:scale(1.0076,0.9250);transform-origin:0 8.00px;">Formulas</span>
<span style="left:280.75px;top:49.00px;font-size:10.3px;color:#1c1c1c;transform:scale(0.9763,0.9250);transform-origin:0 8.00px;">Data</span>
<span style="left:318.75px;top:49.00px;font-size:10.3px;color:#1c1c1c;transform:scale(0.9551,0.9250);transform-origin:0 8.00px;">Review</span>
<span style="left:367.5px;top:49.00px;font-size:10.3px;color:#1c1c1c;transform:scale(1.0162,0.9250);transform-origin:0 8.00px;">View</span>
<span style="left:406.75px;top:49.00px;font-size:10.3px;color:#1c1c1c;transform:scale(1.0386,0.9250);transform-origin:0 8.00px;">Developer</span>
<span style="left:472.5px;top:49.00px;font-size:10.3px;color:#1c1c1c;transform:scale(1.0147,0.9250);transform-origin:0 8.00px;">Help</span>
<span style="left:511.7px;top:49.00px;font-size:10.3px;color:#1c1c1c;transform:scale(1.0191,0.9250);transform-origin:0 8.00px;">Power Pivot</span>
<span style="left:620px;top:48.00px;font-size:10.3px;color:#222;transform:scale(1.0245,0.9250);transform-origin:0 8.00px;">Comments</span>
<span style="left:21.9px;top:101.00px;font-size:9.8px;color:#1a1a1a;transform:scale(0.8938,1.1167);transform-origin:0 8.00px;">Paste</span>
<span style="left:24.9px;top:134.00px;font-size:8.7px;color:#2e2e2e;transform:scaleX(0.9950);">Clipboard</span>
<span style="left:99.7px;top:73.00px;font-size:10px;color:#1a1a1a;transform:scale(0.9385,0.8875);transform-origin:0 8.00px;">Calibri</span>
<span style="left:185.3px;top:73.00px;font-size:10px;color:#1a1a1a;transform:scale(0.8360,0.8875);transform-origin:0 8.00px;">14</span>
<span style="left:104.8px;top:93.00px;font-size:10.2px;color:#222;font-weight:bold;-webkit-text-stroke:0;transform:scale(0.8425,0.8875);transform-origin:0 8.00px;">B</span>
<span style="left:127.2px;top:92.00px;font-size:10.8px;color:#222;font-style:italic;font-family:'Liberation Serif', serif;transform:scale(1.1636,1.0143);transform-origin:0 9.00px;">I</span>
<span style="left:146.5px;top:93.00px;font-size:10px;color:#222;transform:scale(0.9676,0.8625);transform-origin:0 8.00px;">U</span>
<span style="left:180.4px;top:91.00px;font-size:14.4px;color:#333;transform:scale(0.9054,1.0400);transform-origin:0 12.00px;">A</span>
<span style="left:203.2px;top:94.00px;font-size:10.6px;color:#333;transform:scale(1.0313,0.9375);transform-origin:0 9.00px;">A</span>
<span style="left:173.5px;top:114.00px;font-size:11.6px;color:#333;transform:scale(0.9438,1.0500);transform-origin:0 9.00px;">A</span>
<span style="left:142.5px;top:134.00px;font-size:8.7px;color:#2e2e2e;transform:scaleX(0.9488);">Font</span>
<span style="left:231px;top:99.00px;font-size:9.8px;color:#1a1a1a;transform:scale(1.0280,1.1167);transform-origin:0 8.00px;">Alignment</span>
<span style="left:290.4px;top:99.00px;font-size:9.8px;color:#1a1a1a;transform:scale(1.0098,1.1167);transform-origin:0 8.00px;">Number</span>
<span style="left:359.9px;top:73.00px;font-size:9.8px;color:#1a1a1a;transform:scale(1.0156,1.1167);transform-origin:0 8.00px;">Conditional Formatting</span>
<span style="left:359.9px;top:95.00px;font-size:9.8px;color:#1a1a1a;transform:scale(0.9720,1.1167);transform-origin:0 8.00px;">Format as Table</span>
<span style="left:359.9px;top:116.00px;font-size:9.8px;color:#1a1a1a;transform:scale(0.9097,1.1167);transform-origin:0 8.00px;">Cell Styles</span>
<span style="left:397.2px;top:134.00px;font-size:8.7px;color:#2e2e2e;transform:scaleX(0.9209);">Styles</span>
<span style="left:496.2px;top:99.00px;font-size:9.8px;color:#1a1a1a;transform:scale(0.8677,1.1167);transform-origin:0 8.00px;">Cells</span>
<span style="left:535.5px;top:99.00px;font-size:9.8px;color:#1a1a1a;transform:scale(0.9743,1.1167);transform-origin:0 8.00px;">Editing</span>
<span style="left:581.4px;top:100.00px;font-size:9.8px;color:#1a1a1a;transform:scale(1.0175,1.1167);transform-origin:0 8.00px;">Add-ins</span>
<span style="left:583.7px;top:134.00px;font-size:8.7px;color:#2e2e2e;transform:scaleX(0.9909);">Add-ins</span>
<span style="left:632.9px;top:100.00px;font-size:9.8px;color:#1a1a1a;transform:scale(0.9495,1.1167);transform-origin:0 8.00px;">Analyze</span>
<span style="left:639.6px;top:113.00px;font-size:9.8px;color:#1a1a1a;transform:scale(0.9419,1.1167);transform-origin:0 8.00px;">Data</span>
<span style="left:10.3px;top:159.00px;font-size:13px;color:#1f1f1f;transform:scaleX(1.0185);">C10</span>
<span style="left:150.9px;top:157.00px;font-size:13.2px;color:#222;font-weight:bold;-webkit-text-stroke:0;font-style:italic;font-family:'Liberation Serif', serif;transform:scaleX(1.0545);">fx</span>
<span style="left:180px;top:159.00px;font-size:13px;color:#1f1f1f;transform:scaleX(1.0487);">=TINV(2*C7,C5-1)</span>
<span style="left:57.85px;top:208.00px;font-size:12.4px;color:#262626;transform:scale(1.0042,1.0444);transform-origin:0 10.00px;">A</span>
<span style="left:198.0px;top:208.00px;font-size:12.4px;color:#262626;transform:scale(0.8469,1.0444);transform-origin:0 10.00px;">B</span>
<span style="left:536.0px;top:208.00px;font-size:12.4px;color:#262626;transform:scale(0.8935,1.0444);transform-origin:0 10.00px;">D</span>
<span style="left:606.85px;top:208.00px;font-size:12.4px;color:#262626;transform:scale(0.7622,1.0444);transform-origin:0 10.00px;">E</span>
<span style="left:678.1px;top:208.00px;font-size:12.4px;color:#262626;transform:scale(0.8181,1.0444);transform-origin:0 10.00px;">F</span>
<span style="left:401.5px;top:208.00px;font-size:12.4px;color:#1e7145;transform:scale(0.8935,1.0444);transform-origin:0 10.00px;">C</span>
<span style="left:10.0px;top:228.00px;font-size:12.4px;color:#262626;transform:scale(0.9846,1.0444);transform-origin:0 10.00px;">2</span>
<span style="left:10.0px;top:248.00px;font-size:12.4px;color:#262626;transform:scale(0.9846,1.0444);transform-origin:0 10.00px;">3</span>
<span style="left:10.0px;top:268.00px;font-size:12.4px;color:#262626;transform:scale(0.9846,1.0444);transform-origin:0 10.00px;">4</span>
<span style="left:10.0px;top:289.00px;font-size:12.4px;color:#262626;transform:scale(0.9846,1.0444);transform-origin:0 10.00px;">5</span>
<span style="left:10.0px;top:309.00px;font-size:12.4px;color:#262626;transform:scale(0.9846,1.0444);transform-origin:0 10.00px;">6</span>
<span style="left:10.0px;top:330.00px;font-size:12.4px;color:#262626;transform:scale(0.9846,1.0444);transform-origin:0 10.00px;">7</span>
<span style="left:10.0px;top:350.00px;font-size:12.4px;color:#262626;transform:scale(0.9846,1.0444);transform-origin:0 10.00px;">8</span>
<span style="left:10.0px;top:370.00px;font-size:12.4px;color:#262626;transform:scale(0.9846,1.0444);transform-origin:0 10.00px;">9</span>
<span style="left:6.0px;top:391.00px;font-size:12.4px;color:#1e7145;transform:scale(1.0727,1.0444);transform-origin:0 10.00px;">10</span>
<span style="left:6.0px;top:411.00px;font-size:12.4px;color:#262626;transform:scale(1.1495,1.0444);transform-origin:0 10.00px;">11</span>
<span style="left:6.0px;top:431.00px;font-size:12.4px;color:#262626;transform:scale(1.0727,1.0444);transform-origin:0 10.00px;">12</span>
<span style="left:6.0px;top:451.00px;font-size:12.4px;color:#262626;transform:scale(1.0727,1.0444);transform-origin:0 10.00px;">13</span>
<span style="left:257.5px;top:227.00px;font-size:13.3px;color:#000;font-weight:bold;-webkit-text-stroke:0;transform:scale(0.9847,1.0667);transform-origin:0 11.00px;">TINV Function</span>
<span style="left:100px;top:247.00px;font-size:13.3px;color:#000;transform:scale(1.0645,1.0667);transform-origin:0 11.00px;">Population Mean</span>
<span style="left:100px;top:267.00px;font-size:13.3px;color:#000;transform:scale(1.0299,1.0667);transform-origin:0 11.00px;">Sample Mean</span>
<span style="left:100px;top:288.00px;font-size:13.3px;color:#000;transform:scale(1.0568,1.0667);transform-origin:0 11.00px;">Count</span>
<span style="left:100px;top:308.00px;font-size:13.3px;color:#000;transform:scale(1.0477,1.0667);transform-origin:0 11.00px;">Standard Deviation</span>
<span style="left:100px;top:329.00px;font-size:13.3px;color:#000;transform:scale(1.0122,1.0667);transform-origin:0 11.00px;">Significance Level</span>
<span style="left:487.5px;top:247.00px;font-size:13.3px;color:#000;transform:scale(1.0137,1.0667);transform-origin:0 11.00px;">32</span>
<span style="left:487.5px;top:267.00px;font-size:13.3px;color:#000;transform:scale(1.0137,1.0667);transform-origin:0 11.00px;">14</span>
<span style="left:487.5px;top:288.00px;font-size:13.3px;color:#000;transform:scale(1.0137,1.0667);transform-origin:0 11.00px;">23</span>
<span style="left:495.2px;top:308.00px;font-size:13.3px;color:#000;transform:scale(0.9857,1.0667);transform-origin:0 11.00px;">2</span>
<span style="left:475.75px;top:329.00px;font-size:13.3px;color:#000;transform:scale(1.0332,1.0667);transform-origin:0 11.00px;">0.05</span>
<span style="left:100px;top:369.00px;font-size:13.3px;color:#000;transform:scale(1.1224,1.0667);transform-origin:0 11.00px;">t calculated</span>
<span style="left:100px;top:389.00px;font-size:13.3px;color:#000;transform:scale(1.1482,1.0667);transform-origin:0 11.00px;">t critical value</span>
<span style="left:100px;top:410.00px;font-size:13.3px;color:#000;transform:scale(1.0196,1.0667);transform-origin:0 11.00px;">Decision</span>
<span style="left:422px;top:369.00px;font-size:13.3px;color:#000;transform:scale(1.0276,1.0667);transform-origin:0 11.00px;">43.16248371</span>
<span style="left:422px;top:389.00px;font-size:13.3px;color:#000;transform:scale(1.0276,1.0667);transform-origin:0 11.00px;">1.717144374</span>
<span style="left:310px;top:410.00px;font-size:13.3px;color:#000;transform:scale(1.0559,1.0667);transform-origin:0 11.00px;">Reject the null hypothesis</span>
<span style="left:98.1px;top:485.00px;font-size:11.3px;color:#1c1c1c;transform:scaleX(0.9574);">Sheet25</span>
<span style="left:160.4px;top:485.00px;font-size:11.3px;color:#1c1c1c;transform:scaleX(0.9740);">Sheet23</span>
<span style="left:222.9px;top:485.00px;font-size:11.3px;color:#1c1c1c;transform:scaleX(0.9740);">Sheet22</span>
<span style="left:284.4px;top:485.00px;font-size:11.3px;color:#1c1c1c;transform:scaleX(0.9503);">Sheet11</span>
<span style="left:9.25px;top:508.00px;font-size:8.6px;color:#3c3c3c;transform:scaleX(0.9157);">Ready</span>
<span style="left:88.1px;top:508.00px;font-size:8.6px;color:#333;font-weight:bold;-webkit-text-stroke:0;transform:scaleX(0.9980);">Accessibility: Investigate</span>
<span style="left:681.7px;top:508.00px;font-size:8.6px;color:#333;transform:scaleX(0.9552);">100%</span>
</div></body></html>
